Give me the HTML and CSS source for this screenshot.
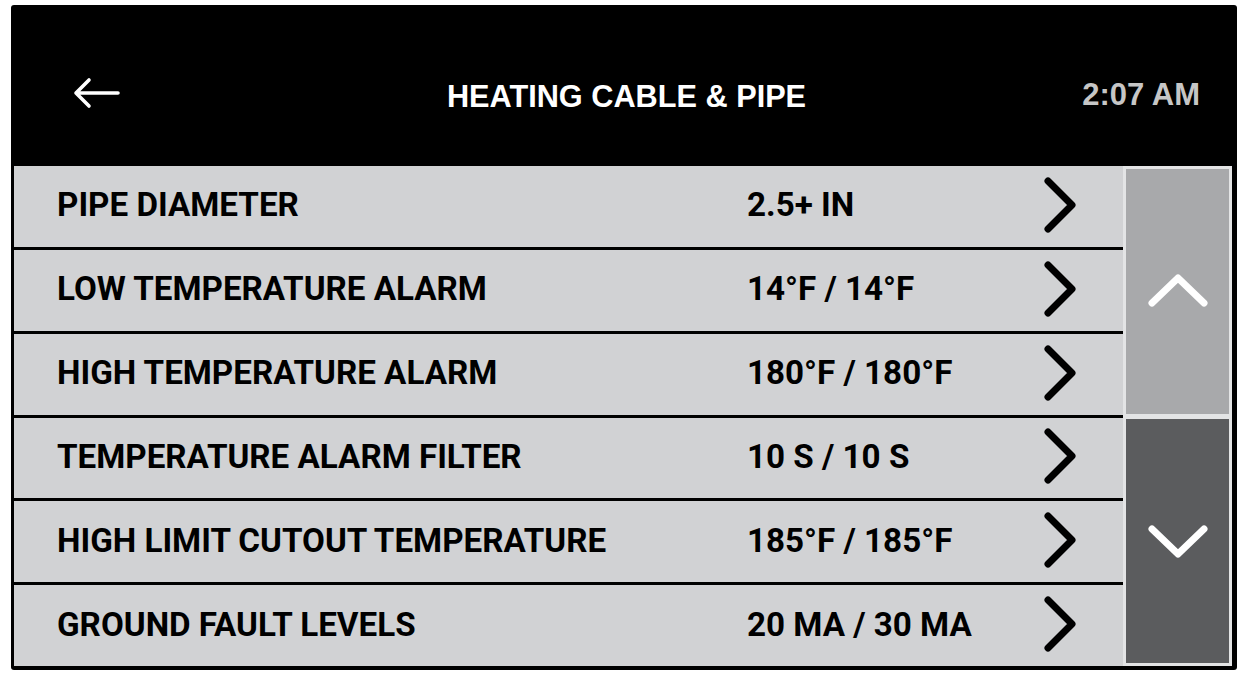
FILE: index.html
```html
<!DOCTYPE html>
<html>
<head>
<meta charset="utf-8">
<link rel="stylesheet" href="styles.css">
</head>
<body>
<div class="frame">
  <header class="header">
    <svg class="back" width="48" height="34" viewBox="0 0 48 34">
      <path d="M46 16H4 M17 3L4 16L17 29" fill="none" stroke="#fff" stroke-width="3.6" stroke-linecap="round" stroke-linejoin="round"/>
    </svg>
    <div class="title">HEATING CABLE &amp; PIPE</div>
    <div class="time">2:07 AM</div>
  </header>
  <div class="content">
    <div class="list">
      <div class="row"><span class="label">PIPE DIAMETER</span><span class="value">2.5+ IN</span><svg class="chev" viewBox="0 0 36 58"><path d="M6 5L30 29L6 53" fill="none" stroke="#000" stroke-width="7" stroke-linecap="round" stroke-linejoin="round"/></svg></div>
      <div class="row"><span class="label">LOW TEMPERATURE ALARM</span><span class="value">14°F / 14°F</span><svg class="chev" viewBox="0 0 36 58"><path d="M6 5L30 29L6 53" fill="none" stroke="#000" stroke-width="7" stroke-linecap="round" stroke-linejoin="round"/></svg></div>
      <div class="row"><span class="label">HIGH TEMPERATURE ALARM</span><span class="value">180°F / 180°F</span><svg class="chev" viewBox="0 0 36 58"><path d="M6 5L30 29L6 53" fill="none" stroke="#000" stroke-width="7" stroke-linecap="round" stroke-linejoin="round"/></svg></div>
      <div class="row"><span class="label">TEMPERATURE ALARM FILTER</span><span class="value">10 S / 10 S</span><svg class="chev" viewBox="0 0 36 58"><path d="M6 5L30 29L6 53" fill="none" stroke="#000" stroke-width="7" stroke-linecap="round" stroke-linejoin="round"/></svg></div>
      <div class="row"><span class="label">HIGH LIMIT CUTOUT TEMPERATURE</span><span class="value">185°F / 185°F</span><svg class="chev" viewBox="0 0 36 58"><path d="M6 5L30 29L6 53" fill="none" stroke="#000" stroke-width="7" stroke-linecap="round" stroke-linejoin="round"/></svg></div>
      <div class="row"><span class="label">GROUND FAULT LEVELS</span><span class="value">20 MA / 30 MA</span><svg class="chev" viewBox="0 0 36 58"><path d="M6 5L30 29L6 53" fill="none" stroke="#000" stroke-width="7" stroke-linecap="round" stroke-linejoin="round"/></svg></div>
    </div>
    <div class="scroll">
      <div class="btn up"><svg width="62" height="38" viewBox="0 0 62 38"><path d="M5 31L31 6L57 31" fill="none" stroke="#fff" stroke-width="7" stroke-linecap="round" stroke-linejoin="round"/></svg></div>
      <div class="btn down"><svg width="62" height="38" viewBox="0 0 62 38"><path d="M5 7L31 32L57 7" fill="none" stroke="#fff" stroke-width="7" stroke-linecap="round" stroke-linejoin="round"/></svg></div>
    </div>
  </div>
</div>
</body>
</html>
```
FILE: styles.css
```css
html, body {
  margin: 0;
  padding: 0;
  background: #fff;
}
.frame {
  margin: 5px 0 0 11px;
  width: 1226px;
  height: 665px;
  box-sizing: border-box;
  background: #000;
  padding: 0 5px 4px 3px;
  border-radius: 3px;
  display: flex;
  flex-direction: column;
}
.header {
  height: 161px;
  box-sizing: border-box;
  padding: 22px 32px 0 58px;
  flex: none;
  display: grid;
  grid-template-columns: 1fr auto 1fr;
  align-items: center;
}
.back {
  display: block;
  margin-top: -5px;
}
.title {
  font-family: "Liberation Sans", Arial, sans-serif;
  font-weight: 700;
  font-size: 30.7px;
  color: #fff;
  margin-right: 19px;
}
.time {
  justify-self: end;
  font-family: "Liberation Sans", Arial, sans-serif;
  font-weight: 700;
  font-size: 31px;
  color: #c6c6c6;
  margin-top: -4px;
}
.content {
  flex: 1;
  display: grid;
  grid-template-columns: 1109px 109px;
}
.list {
  display: grid;
  grid-template-rows: repeat(6, 1fr);
  row-gap: 3px;
  background: #000;
}
.row {
  background: #d1d2d4;
  display: flex;
  align-items: center;
  padding-left: 43px;
  padding-bottom: 3px;
  font-family: Roboto, "Liberation Sans", sans-serif;
  font-weight: 700;
  font-size: 33.2px;
  color: #000;
}
.label {
  width: 690px;
  flex: none;
}
.value {
  width: 295px;
  flex: none;
}
.chev {
  width: 36px;
  height: 58px;
  display: block;
}
.scroll {
  background: #e3e4e5;
  padding: 3px;
  display: grid;
  grid-template-rows: 1fr 1fr;
  row-gap: 5px;
}
.btn {
  display: flex;
  align-items: center;
  justify-content: center;
}
.btn.up {
  background: #a8a9ab;
}
.btn.down {
  background: #5b5c5e;
}
```
